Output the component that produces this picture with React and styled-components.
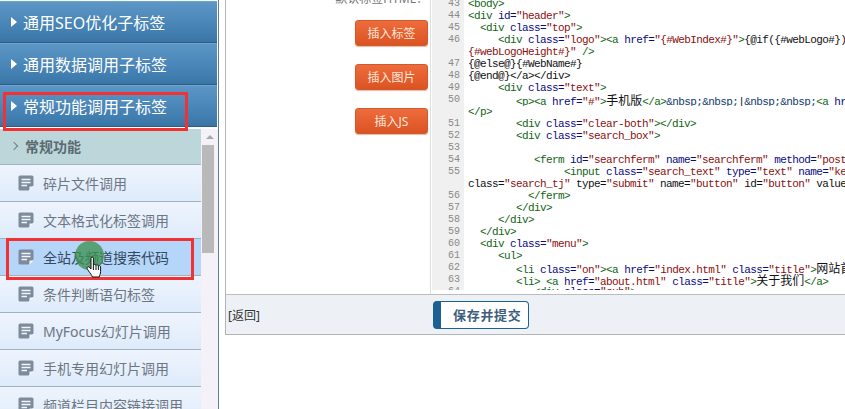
import React from 'react'
import styled, { createGlobalStyle } from 'styled-components'

const sans = `"Noto Sans", "Noto Sans CJK SC", sans-serif`

const GlobalStyle = createGlobalStyle`
    html, body {
        margin: 0;
        padding: 0;
        background: #fff;
        overflow: hidden;
    }
`;

const Page = styled.div`
    display: flex;
    width: 845px;
    height: 409px;
    overflow: hidden;
    font-family: ${sans};
    background: #fff;
`;

/* left menu */
const Sidebar = styled.div`
    position: relative;
    flex: none;
    width: 219px;
    height: 409px;
    padding-top: 1px;
    box-sizing: border-box;
    border-right: 1px solid #5f7f90;
    display: flex;
    flex-direction: column;
    overflow: hidden;
    background: #fdfdff;
`;
const GroupHeader = styled.div`
    flex: none;
    height: 42px;
    margin-right: 1px;
    box-sizing: border-box;
    display: flex;
    align-items: center;
    gap: 6px;
    padding: 0 0 1px 11px;
    background: linear-gradient(#5b96c6, #3f7cae 85%, #3a74a4);
    border-top: 1px solid #6ea5cf;
    border-bottom: 1px solid #2c5d85;
    color: #fff;
    font-size: 16px;
    line-height: 20px;
`;
const GroupName = styled.span`
    margin-top: 3px;
`;
const Triangle = styled.span`
    flex: none;
    width: 0;
    height: 0;
    border-left: 6px solid #fff;
    border-top: 5px solid transparent;
    border-bottom: 5px solid transparent;
`;
const SubMenu = styled.div`
    flex: 1;
    min-height: 0;
    margin-top: 2px;
    display: flex;
`;
const SubList = styled.div`
    flex: 1;
    min-width: 0;
`;
const SubTitle = styled.div`
    height: 36px;
    box-sizing: border-box;
    display: flex;
    align-items: center;
    gap: 8px;
    padding: 0 0 2px 13px;
    background: #bcd6da;
    border-bottom: 1px solid #9db5bd;
    color: #5b6b72;
    font-size: 14px;
    font-weight: 700;
`;
const Chevron = styled.span`
    width: 5px;
    height: 5px;
    margin-left: -2px;
    border-top: 1px solid #6f8088;
    border-right: 1px solid #6f8088;
    transform: rotate(45deg);
`;
const SubItem = styled.div`
    height: 37px;
    box-sizing: border-box;
    display: flex;
    align-items: center;
    gap: 9px;
    padding-left: 18px;
    background: ${({$active}) => $active ? '#b5d5f9' : 'linear-gradient(#eef4fd, #dfebfb)'};
    border-bottom: 1px solid #9fb3bf;
    color: ${({$active}) => $active ? '#33495e' : '#6d7782'};
    font-size: 14px;
    white-space: nowrap;
`;
const ScrollRail = styled.div`
    flex: none;
    width: 17px;
    background: #f4f2f8;
`;
const ScrollArrow = styled.div`
    height: 16px;
    display: flex;
    align-items: center;
    justify-content: center;
    &::before {
        content: '';
        border-left: 4px solid transparent;
        border-right: 4px solid transparent;
        border-bottom: 4px solid #a8a8a8;
    }
`;
const ScrollThumb = styled.div`
    width: 12px;
    height: 108px;
    margin-left: 1px;
    background: #b9b9b9;
`;

/* annotations on top of the menu */
const RedBox = styled.div`
    position: absolute;
    box-sizing: border-box;
    left: ${({$x}) => $x}px;
    top: ${({$y}) => $y}px;
    width: ${({$w}) => $w}px;
    height: ${({$h}) => $h}px;
    border: 3px solid #f23232;
`;
const ClickDot = styled.div`
    position: absolute;
    left: 75px;
    top: 241px;
    width: 29px;
    height: 29px;
    border-radius: 50%;
    background: rgba(62, 145, 80, 0.78);
`;
const Cursor = styled.svg`
    position: absolute;
    left: 86px;
    top: 256px;
`;

/* right side */
const Main = styled.div`
    flex: 1;
    min-width: 0;
    padding-left: 6px;
`;
const Panel = styled.div`
    margin-top: -2px;
    border-left: 1px solid #b4b4b4;
`;
const FormRow = styled.div`
    display: flex;
    height: 296px;
    overflow: hidden;
`;
const LeftCol = styled.div`
    flex: none;
    width: 205px;
    box-sizing: border-box;
    padding-right: 2px;
    border-right: 1px solid #dedede;
    display: flex;
    flex-direction: column;
    align-items: flex-end;
    gap: 18px;
`;
const FieldLabel = styled.div`
    margin: -6px 0 -4px;
    line-height: 14px;
    font-size: 12px;
    color: #777;
`;
const OrangeButton = styled.div`
    width: 73px;
    height: 26px;
    box-sizing: border-box;
    display: flex;
    align-items: center;
    justify-content: center;
    border: 1px solid #cf5a2e;
    border-radius: 3px;
    background: linear-gradient(#ee6c3c, #dc5322);
    box-shadow: 0 1px 1px #e8b9a4;
    color: #fbe6dc;
    font-size: 12px;
`;
const Editor = styled.div`
    flex: 1;
    min-width: 0;
    height: 292px;
    overflow: hidden;
`;
const CodeRow = styled.div`
    display: flex;
    height: 12px;
`;
const LineNo = styled.div`
    flex: none;
    width: 32px;
    box-sizing: border-box;
    padding-right: 4px;
    margin-left: 1px;
    text-align: right;
    background: #f0f0f0;
    color: #8a8a8a;
    font: 10px/12px "Liberation Mono", monospace;
`;
const CodeText = styled.div`
    flex: 1;
    min-width: 0;
    padding-left: 4px;
    white-space: pre;
    overflow: hidden;
    font: 11px/12px "Liberation Mono", "Noto Sans CJK SC", monospace;
    letter-spacing: -0.6px;
`;
const tokenColors = {
    tag: '#0f6414',
    attr: '#0a0a80',
    str: '#8a1010',
    ent: '#123a6a',
    text: '#111',
};
const Token = styled.span`
    color: ${({$kind}) => tokenColors[$kind]};
`;
const CjkText = styled.span`
    color: #111;
    font-family: "Noto Sans CJK SC", sans-serif;
    font-size: 12px;
    letter-spacing: 0;
`;
const Footer = styled.div`
    height: 41px;
    box-sizing: border-box;
    display: flex;
    align-items: center;
    background: #edf1f6;
    border-top: 1px solid #bcbcbc;
    border-bottom: 1px solid #b4b4b4;
`;
const BackLink = styled.div`
    flex: none;
    width: 205px;
    padding-left: 2px;
    box-sizing: border-box;
    font-size: 12px;
    color: #333;
`;
const SaveButton = styled.div`
    width: 96px;
    height: 28px;
    margin-left: 2px;
    box-sizing: border-box;
    padding-left: 12px;
    display: flex;
    align-items: center;
    background: #fff;
    border: 1px solid #1c6094;
    border-left-width: 8px;
    border-radius: 4px;
    color: #3f5d7c;
    font-size: 13px;
    font-weight: 700;
    letter-spacing: 0.7px;
    white-space: nowrap;
`;

const groups = ['通用SEO优化子标签', '通用数据调用子标签', '常规功能调用子标签']
const items = [
    '碎片文件调用',
    '文本格式化标签调用',
    '全站及频道搜索代码',
    '条件判断语句标签',
    'MyFocus幻灯片调用',
    '手机专用幻灯片调用',
    '频道栏目内容链接调用',
]

// [line number, code]; an empty number is a wrapped line
const code = [
    [43, '<body>'],
    [44, '<div id="header">'],
    [45, '  <div class="top">'],
    [46, '     <div class="logo"><a href="{#WebIndex#}">{@if({#webLogo#})'],
    ['', '{#webLogoHeight#}" />'],
    [47, '{@else@}{#WebName#}'],
    [48, '{@end@}</a></div>'],
    [49, '     <div class="text">'],
    [50, '        <p><a href="#">手机版</a>&nbsp;&nbsp;|&nbsp;&nbsp;<a href="#">'],
    ['', '</p>'],
    [51, '        <div class="clear-both"></div>'],
    [52, '        <div class="search_box">'],
    [53, ''],
    [54, '           <ferm id="searchferm" name="searchferm" method="post"'],
    [55, '                <input class="search_text" type="text" name="keyword"'],
    ['', 'class="search_tj" type="submit" name="button" id="button" value="'],
    [56, '          </ferm>'],
    [57, '        </div>'],
    [58, '     </div>'],
    [59, '  </div>'],
    [60, '  <div class="menu">'],
    [61, '     <ul>'],
    [62, '        <li class="on"><a href="index.html" class="title">网站首页</a>'],
    [63, '        <li> <a href="about.html" class="title">关于我们</a>'],
    [64, '           <div class="sub">'],
]

const tokenRe = /(\{#\w+#\}")|("[^"]*"?)|(<\/?[a-z]+|\/?>)|(&nbsp;)|([\u4e00-\u9fff]+)|(\{[^\s]*)|([a-z_]+=?)|(\s+|.)/g

const CodeLine = ({text}) => {
    const parts = []
    let m
    let inTag = false
    tokenRe.lastIndex = 0
    while ((m = tokenRe.exec(text))) {
        const key = m.index
        if (m[1] || m[2]) parts.push(<Token key={key} $kind="str">{m[0]}</Token>)
        else if (m[3]) {
            inTag = m[3][m[3].length - 1] !== '>'
            parts.push(<Token key={key} $kind="tag">{m[0]}</Token>)
        }
        else if (m[4]) parts.push(<Token key={key} $kind="ent">{m[0]}</Token>)
        else if (m[5]) parts.push(<CjkText key={key}>{m[0]}</CjkText>)
        else if (m[7]) parts.push(<Token key={key} $kind={inTag ? 'attr' : 'text'}>{m[0]}</Token>)
        else parts.push(<Token key={key} $kind="text">{m[0]}</Token>)
    }
    return <CodeText>{parts}</CodeText>
}

const NoteIcon = () => (
    <svg width="16" height="16" viewBox="0 0 16 16" style={{flex: 'none'}}>
        <path d="M2 0.5H14a1.5 1.5 0 0 1 1.5 1.5V10.5L10.5 15.5H2A1.5 1.5 0 0 1 0.5 14V2A1.5 1.5 0 0 1 2 0.5Z" fill="#7d8b9b" />
        <path d="M3.5 4.5H12.5M3.5 7.5H12.5M3.5 10.5H9" stroke="#f2f6fc" strokeWidth="1.4" />
        <path d="M15.5 11.5L11.5 15.5V11.5Z" fill="#f2f6fc" />
    </svg>
)

const HandCursor = () => (
    <Cursor width="18" height="22" viewBox="0 0 18 22">
        <path
            d="M5 2.2C5 .8 7.4 .8 7.4 2.2V9C7.6 8 9.8 8 10 9.4 10.3 8.4 12.2 8.6 12.4 10 12.8 9.2 14.6 9.6 14.6 11V15.5C14.6 18 13.6 19 13.2 21H6.4C5.8 19 4.4 17.6 2.6 15 1.2 13 .6 11.8 1.4 11 2.2 10.2 3.6 11 5 13Z"
            fill="#fff"
            stroke="#111"
            strokeWidth="1"
            strokeLinejoin="round"
        />
        <path d="M7.4 9V14M10 9.4V14M12.4 10V14" stroke="#111" strokeWidth="1" />
    </Cursor>
)

const App = () => {
    return (
        <Page>
            <GlobalStyle />
            <Sidebar>
                {groups.map(name => (
                    <GroupHeader key={name}>
                        <Triangle />
                        <GroupName>{name}</GroupName>
                    </GroupHeader>
                ))}
                <SubMenu>
                    <SubList>
                        <SubTitle>
                            <Chevron />
                            常规功能
                        </SubTitle>
                        {items.map((name, i) => (
                            <SubItem key={name} $active={i === 2}>
                                <NoteIcon />
                                {name}
                            </SubItem>
                        ))}
                    </SubList>
                    <ScrollRail>
                        <ScrollArrow />
                        <ScrollThumb />
                    </ScrollRail>
                </SubMenu>
                <RedBox $x={3} $y={92} $w={185} $h={39} />
                <RedBox $x={6} $y={238} $w={188} $h={42} />
                <ClickDot />
                <HandCursor />
            </Sidebar>
            <Main>
                <Panel>
                    <FormRow>
                        <LeftCol>
                            <FieldLabel>默认标签HTML：</FieldLabel>
                            <OrangeButton>插入标签</OrangeButton>
                            <OrangeButton>插入图片</OrangeButton>
                            <OrangeButton>插入JS</OrangeButton>
                        </LeftCol>
                        <Editor>
                            {code.map(([no, text], i) => (
                                <CodeRow key={i}>
                                    <LineNo>{no}</LineNo>
                                    <CodeLine text={text} />
                                </CodeRow>
                            ))}
                        </Editor>
                    </FormRow>
                    <Footer>
                        <BackLink>[返回]</BackLink>
                        <SaveButton>保存并提交</SaveButton>
                    </Footer>
                </Panel>
            </Main>
        </Page>
    )
}

export default App
